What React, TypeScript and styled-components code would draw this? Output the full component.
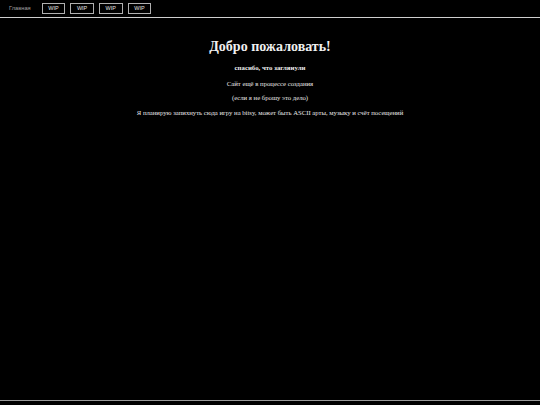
import styled, { createGlobalStyle } from "styled-components";

const GlobalStyle = createGlobalStyle`
  html, body {
    margin: 0;
    padding: 0;
    background: #000;
    color: #fff;
  }
  body {
    font-family: "Liberation Serif", "Times New Roman", serif;
  }
`;

const Page = styled.div`
  display: flex;
  flex-direction: column;
  min-height: 100vh;
  box-sizing: border-box;
`;

const Nav = styled.nav`
  display: flex;
  align-items: center;
  height: 16.5px;
  padding: 0 9px;
  border-bottom: 1.5px solid #cfcfcf;
  font-family: "Liberation Sans", Arial, sans-serif;
`;

const HomeLink = styled.a`
  font-size: 5.7px;
  color: #a0a0a0;
  margin-right: 11px;
  text-decoration: none;
`;

const NavButton = styled.button`
  width: 23.5px;
  height: 11px;
  padding: 0;
  margin-right: 5.2px;
  background: #000;
  border: 1px solid #b0b0b0;
  color: #e0e0e0;
  font-family: "Liberation Sans", Arial, sans-serif;
  font-size: 5.5px;
  display: flex;
  align-items: center;
  justify-content: center;
`;

const Main = styled.main`
  flex: 1;
  display: flex;
  flex-direction: column;
  align-items: center;
  padding-top: 21px;
  text-align: center;
`;

const Title = styled.h1`
  font-size: 14px;
  line-height: 16px;
  font-weight: bold;
  margin: 0 0 9px;
  color: #f0f0f0;
`;

const Subtitle = styled.h3`
  font-size: 6.8px;
  line-height: 8px;
  font-weight: bold;
  margin: 0 0 8px;
  color: #eee;
`;

const Text = styled.p`
  font-size: 6.7px;
  line-height: 8px;
  margin: 0 0 6.5px;
  color: #e8e8e8;
`;

const Footer = styled.footer`
  height: 4px;
  border-top: 1.5px solid #9a9a9a;
`;

export default function App() {
  return (
    <>
      <GlobalStyle />
      <Page>
        <Nav>
          <HomeLink href="#">Главная</HomeLink>
          <NavButton>WIP</NavButton>
          <NavButton>WIP</NavButton>
          <NavButton>WIP</NavButton>
          <NavButton>WIP</NavButton>
        </Nav>
        <Main>
          <Title>Добро пожаловать!</Title>
          <Subtitle>спасибо, что заглянули</Subtitle>
          <Text>Сайт ещё в процессе создания</Text>
          <Text>(если я не брошу это дело)</Text>
          <Text>
            Я планирую запихнуть сюда игру на bitsy, может быть ASCII арты,
            музыку и счёт посещений
          </Text>
        </Main>
        <Footer />
      </Page>
    </>
  );
}
